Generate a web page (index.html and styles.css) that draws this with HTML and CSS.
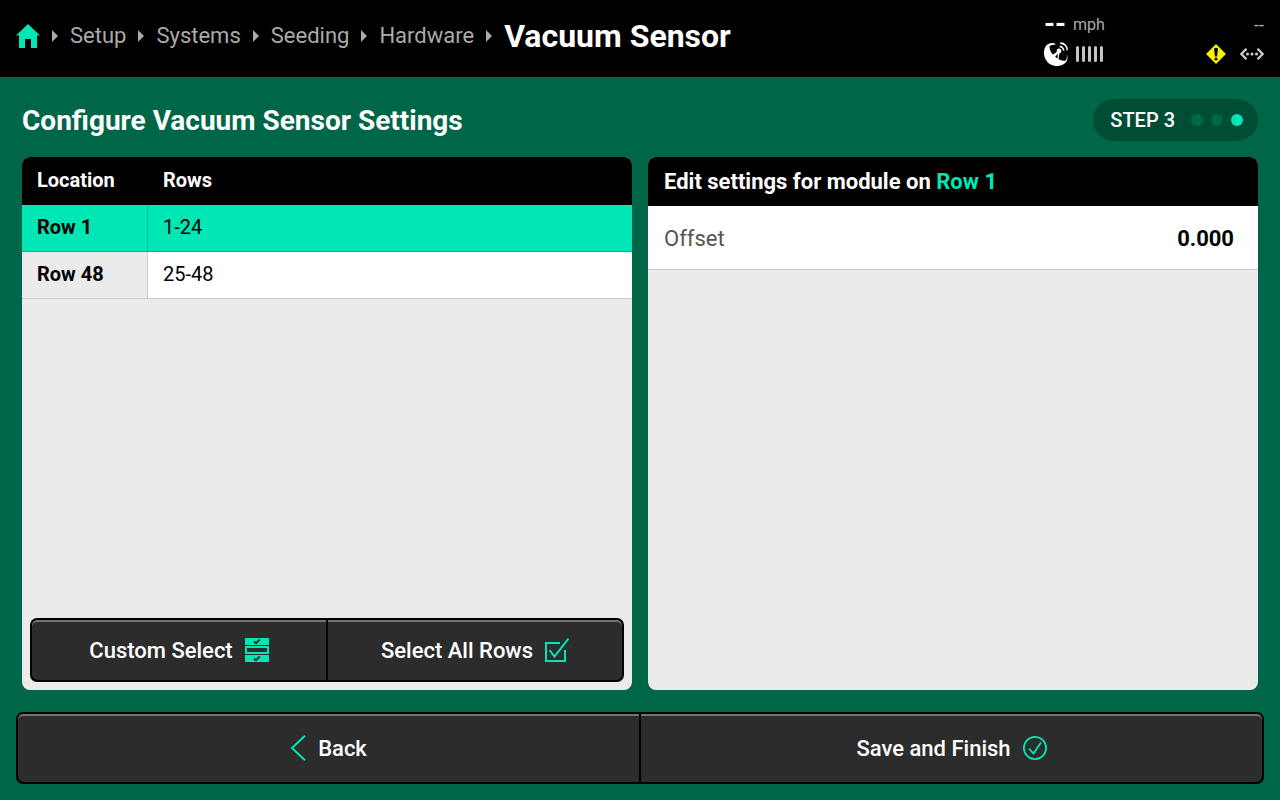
FILE: index.html
```html
<!DOCTYPE html>
<html lang="en">
<head>
    <meta charset="UTF-8">
    <meta name="viewport" content="width=device-width, initial-scale=1.0">
    <title>Vacuum Sensor</title>
    <link rel="stylesheet" href="styles.css">
</head>
<body>
    <header class="topbar">
        <nav class="breadcrumb" aria-label="Breadcrumb">
            <a href="#" class="home" aria-label="Home">
                <svg width="24" height="24" viewBox="0 0 24 24"><path d="M12 0L24 11.5H21V24H15V15H9V24H3V11.5H0Z" fill="#00e6b4"/></svg>
            </a>
            <a href="#">Setup</a>
            <a href="#">Systems</a>
            <a href="#">Seeding</a>
            <a href="#">Hardware</a>
            <h1>Vacuum Sensor</h1>
        </nav>
        <div class="status">
            <div class="status-row">
                <div class="speed"><strong>--</strong><span>mph</span></div>
                <span class="clock">--</span>
            </div>
            <div class="status-row">
                <div class="gps">
                    <svg width="24" height="24" viewBox="0 0 24 24">
                        <path d="M8 1C2.500 1-.500 6.500 0 12C.600 19 6 24 12.500 24C17.500 24 21.500 21.800 23 18.500Q24 15.500 22.800 12.200Q23.200 18.500 20.800 18.800C14 19.500 4 9.500 5.800 4Q7 2.400 12 2.400Q10.500 1 8 1Z" fill="#fff"/>
                        <path d="M8.500 13.500L15 9.200L14 17" fill="none" stroke="#fff" stroke-width="1.200"/>
                        <path d="M9.500 15L15 9.400" fill="none" stroke="#fff" stroke-width="2"/>
                        <circle cx="15" cy="9" r="2.400" fill="#fff"/>
                        <path d="M15.600 4.400C17.800 4.500 19.600 6.400 19.700 8.600M16.200 1.100C20.200 1 23.200 4 23.200 8.200" fill="none" stroke="#fff" stroke-width="1.600"/>
                    </svg>
                    <svg width="28" height="16" viewBox="0 0 28 16"><path d="M1.500 1.500V14.500M7.500 1.500V14.500M13.500 1.500V14.500M19.500 1.500V14.500M25.500 1.500V14.500" stroke="#c4c4c4" stroke-width="3" stroke-linecap="round"/></svg>
                </div>
                <div class="alerts">
                    <svg width="20" height="20" viewBox="0 0 20 20">
                        <path d="M10 0L20 10L10 20L0 10Z" fill="#ffee00"/>
                        <path d="M8 4.500Q10 3 12 4.500L11 12.500H9Z" fill="#000"/>
                        <circle cx="10" cy="15" r="1.500" fill="#000"/>
                    </svg>
                    <svg width="24" height="12" viewBox="0 0 24 12">
                        <path d="M6.500 .800L1.400 6L6.500 11.200M17.500 .800L22.600 6L17.500 11.200" fill="none" stroke="#d0d0d0" stroke-width="2.200"/>
                        <path d="M6 6a1.500 1.500 0 1 0 3 0a1.500 1.500 0 1 0-3 0M10.500 6a1.500 1.500 0 1 0 3 0a1.500 1.500 0 1 0-3 0M15 6a1.500 1.500 0 1 0 3 0a1.500 1.500 0 1 0-3 0" fill="#d0d0d0"/>
                    </svg>
                </div>
            </div>
        </div>
    </header>

    <main class="content">
        <div class="heading">
            <h2>Configure Vacuum Sensor Settings</h2>
            <div class="step">
                <span>STEP 3</span>
                <div class="dots"><i></i><i></i><i class="on"></i></div>
            </div>
        </div>

        <div class="panels">
            <section class="panel">
                <table class="rows">
                    <thead>
                        <tr><th scope="col">Location</th><th scope="col">Rows</th></tr>
                    </thead>
                    <tbody>
                        <tr class="selected"><th scope="row">Row 1</th><td>1-24</td></tr>
                        <tr><th scope="row">Row 48</th><td>25-48</td></tr>
                    </tbody>
                </table>
                <div class="button-group select-group">
                    <button type="button">Custom Select
                        <svg width="24" height="24" viewBox="0 0 24 24">
                            <path d="M0 0H24V7H0ZM0 17H24V24H0Z" fill="#00e6b4"/>
                            <path d="M1 9H23V15H1Z" fill="none" stroke="#00e6b4" stroke-width="2"/>
                            <path d="M9 3.500L11 5.200L14.800 1.500M9 20.500L11 22.200L14.800 18.500" fill="none" stroke="#2c2c2c" stroke-width="1.800"/>
                        </svg>
                    </button>
                    <button type="button">Select All Rows
                        <svg width="24" height="24" viewBox="0 0 24 24"><path d="M15 5H1V23H20V12M4.500 12L9.500 18.500L23.500 .500" fill="none" stroke="#00e6b4" stroke-width="2"/></svg>
                    </button>
                </div>
            </section>

            <section class="panel">
                <h3 class="panel-title">Edit settings for module on <span>Row 1</span></h3>
                <div class="field">
                    <label for="offset">Offset</label>
                    <input type="text" id="offset" value="0.000" inputmode="decimal">
                </div>
            </section>
        </div>
    </main>

    <footer class="button-group footer">
        <button type="button">
            <svg width="16" height="26" viewBox="0 0 16 26"><path d="M15 .700L2 13L15 25.300" fill="none" stroke="#00e6b4" stroke-width="2"/></svg>
            Back
        </button>
        <button type="button">Save and Finish
            <svg width="24" height="24" viewBox="0 0 24 24"><circle cx="12" cy="12" r="11.100" fill="none" stroke="#00e6b4" stroke-width="1.800"/><path d="M6 12.500L10.500 17.500L18 6.500" fill="none" stroke="#00e6b4" stroke-width="1.800"/></svg>
        </button>
    </footer>
</body>
</html>
```
FILE: styles.css
```css
* {
    box-sizing: border-box;
}
body {
    display: flex;
    flex-direction: column;
    min-height: 100vh;
    margin: 0;
    background-color: #006648;
    color: #000;
    font-family: Roboto, sans-serif;
    font-size: 20px;
}
h1, h2, h3 {
    margin: 0;
}
svg {
    display: block;
    flex: none;
}

/* top bar */
.topbar {
    display: flex;
    justify-content: space-between;
    min-height: 77px;
    padding: 0 16px;
    background-color: #000;
}
.breadcrumb {
    display: flex;
    align-items: center;
    padding-bottom: 6px;
}
.breadcrumb a {
    display: flex;
    align-items: center;
    color: #aaa;
    font-size: 22px;
    text-decoration: none;
}
.breadcrumb a::after {
    content: "";
    margin: 0 12px;
    border: 6px solid transparent;
    border-left-color: #aaa;
    border-right-width: 0;
}
.breadcrumb h1 {
    color: #fff;
    font-size: 32px;
    font-weight: 700;
}
.status {
    width: 220px;
    padding-top: 12px;
}
.status-row {
    display: flex;
    align-items: center;
    justify-content: space-between;
    height: 24px;
    margin-bottom: 6px;
    color: #aaa;
    font-size: 16px;
}
.speed, .gps {
    display: flex;
    align-items: center;
    gap: 7px;
}
.gps {
    gap: 8px;
}
.speed strong {
    color: #fff;
    font-size: 28px;
    line-height: 24px;
}
.clock {
    font-size: 18px;
}
.alerts {
    display: flex;
    align-items: center;
    gap: 14px;
}

/* page content */
.content {
    display: flex;
    flex: 1;
    flex-direction: column;
    padding: 22px;
}
.heading {
    display: flex;
    align-items: center;
    justify-content: space-between;
    margin-bottom: 16px;
    color: #fff;
}
.heading h2 {
    font-size: 28px;
    font-weight: 700;
}
.step {
    display: flex;
    align-items: center;
    gap: 16px;
    height: 42px;
    padding: 0 15px 0 17px;
    border-radius: 21px;
    background-color: #004d36;
    font-weight: 500;
}
.dots {
    display: flex;
    gap: 8px;
}
.dots i {
    width: 12px;
    height: 12px;
    border-radius: 50%;
    background-color: #006648;
}
.dots .on {
    background-color: #00e6b4;
}
.panels {
    display: grid;
    flex: 1;
    grid-template-columns: 1fr 1fr;
    gap: 16px;
}
.panel {
    display: flex;
    flex-direction: column;
    overflow: hidden;
    border-radius: 8px;
    background-color: #ebebeb;
}

/* row list */
.rows {
    width: 100%;
    border-spacing: 0;
    text-align: left;
}
.rows th, .rows td {
    height: 47px;
    padding: 0 15px 2px;
    border-bottom: 1px solid #ccc;
}
.rows th {
    font-weight: 700;
}
.rows thead th {
    height: 48px;
    border: 0;
    background-color: #000;
    color: #fff;
}
.rows th:first-child {
    width: 126px;
}
.rows tbody th {
    border-right: 1px solid #ccc;
}
.rows td {
    background-color: #fff;
}
.rows .selected th, .rows .selected td {
    border-color: #00b890;
    background-color: #00e6b4;
}

/* module settings */
.panel-title {
    padding: 0 16px;
    background-color: #000;
    color: #fff;
    font-size: 22px;
    font-weight: 700;
    line-height: 49px;
}
.panel-title span {
    color: #00e6b4;
}
.field {
    display: flex;
    align-items: center;
    height: 64px;
    padding: 2px 24px 0 16px;
    border-bottom: 1px solid #ccc;
    background-color: #fff;
    color: #555;
    font-size: 22px;
}
.field input {
    flex: 1;
    min-width: 0;
    padding: 0;
    border: 0;
    background: none;
    color: #000;
    font: inherit;
    font-weight: 700;
    text-align: right;
}

/* buttons */
.button-group {
    display: flex;
    gap: 2px;
    overflow: hidden;
    border: 2px solid #000;
    border-radius: 7px;
    background-color: #000;
}
.button-group button {
    display: flex;
    flex: 1;
    align-items: center;
    justify-content: center;
    gap: 12px;
    border: 0;
    background-color: #2c2c2c;
    box-shadow: inset 0 2px #737373;
    color: #fff;
    font: inherit;
    font-size: 22px;
    font-weight: 500;
    cursor: pointer;
}
.button-group button:first-child {
    border-radius: 5px 0 0 5px;
}
.button-group button:last-child {
    border-radius: 0 5px 5px 0;
}
.select-group {
    height: 64px;
    margin: auto 8px 8px;
}
.footer {
    height: 72px;
    margin: 0 16px 16px;
}
```
